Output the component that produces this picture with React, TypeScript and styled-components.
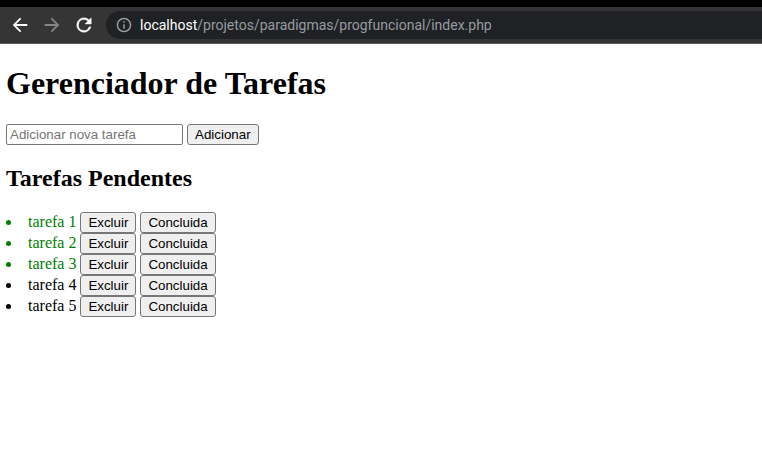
import React, { useState } from "react";
import styled, { createGlobalStyle } from "styled-components";

const GlobalStyle = createGlobalStyle`
  body {
    margin: 0;
    background: #fff;
    color: #000;
    font-family: "Liberation Serif", "Times New Roman", serif;
    font-size: 16px;
  }
`;

const BrowserBar = styled.header`
  display: flex;
  align-items: center;
  height: 28px;
  padding: 4px 0 4px 10px;
  border-top: 7px solid #000;
  border-bottom: 1px solid #5b5b5e;
  background: #353535;
  overflow: hidden;
`;

const NavButtons = styled.nav`
  display: flex;
  flex: none;
  gap: 12px;
  margin-right: 12px;
`;

const NavButton = styled.button`
  display: flex;
  padding: 0;
  border: 0;
  background: none;
  color: #fff;

  &:disabled {
    color: #868686;
  }
`;

const AddressBar = styled.div`
  display: flex;
  flex: 1;
  align-items: center;
  gap: 8px;
  height: 28px;
  padding-left: 10px;
  border-radius: 14px 0 0 14px;
  background: #202124;
  color: #9aa0a6;
`;

const Address = styled.a`
  color: #969ba1;
  font: 14px/20px Roboto, "Open Sans", sans-serif;
  text-decoration: none;
  white-space: nowrap;
`;

const Host = styled.span`
  color: #fff;
`;

const Page = styled.main`
  padding: 0 6px 20px;
`;

const Title = styled.h1`
  margin: 21px 0 22px;
  font-size: 32px;
  line-height: 37px;
`;

const Subtitle = styled.h2`
  margin: 20px 0 19px;
  font-size: 24px;
  line-height: 27px;
`;

const TaskForm = styled.form`
  display: flex;
  gap: 4px;
`;

const TaskInput = styled.input`
  box-sizing: border-box;
  width: 177px;
  height: 21px;
  padding: 1px 3px;
  border: 1px solid #767676;
  border-radius: 2px;
  background: #fff;
  font-family: "Liberation Sans", Arial, sans-serif;

  &::placeholder {
    color: #757575;
  }
`;

const Button = styled.button`
  box-sizing: border-box;
  height: 21px;
  padding: 1px 7px;
  border: 1px solid #767676;
  border-radius: 3px;
  background: #efefef;
  color: #000;
  font-family: "Liberation Sans", Arial, sans-serif;
`;

const TaskList = styled.ul`
  margin: 0;
  padding: 0;
  list-style-position: inside;
`;

const TaskItem = styled.li<{ $done: boolean }>`
  height: 21px;
  color: ${({ $done }) => ($done ? "green" : "#000")};
  line-height: 21px;
  white-space: nowrap;
`;

const BackIcon = () => (
  <svg width="20" height="20" viewBox="1 1 22 22" fill="currentColor" aria-hidden="true">
    <path d="M20 11H7.83l5.590-5.590L12 4l-8 8 8 8 1.410-1.410L7.830 13H20z" />
  </svg>
);

const ForwardIcon = () => (
  <svg width="20" height="20" viewBox="1 1 22 22" fill="currentColor" aria-hidden="true">
    <path d="M4 11h12.170l-5.590-5.590L12 4l8 8-8 8-1.410-1.410L16.170 13H4z" />
  </svg>
);

const ReloadIcon = () => (
  <svg width="20" height="20" viewBox="1 1 22 22" fill="currentColor" aria-hidden="true">
    <path
      d="M17.650 6.350A7.960 7.960 0 0 0 12 4a8 8 0 1 0 7.730 10h-2.080A6 6 0 1 1 12 6c1.660 0 3.140.690 4.220 1.780L13 11h7V4z"
      stroke="currentColor"
      strokeWidth="0.400"
    />
  </svg>
);

const InfoIcon = () => (
  <svg width="16" height="16" viewBox="1 1 22 22" fill="currentColor" aria-hidden="true">
    <path d="M11 7h2v2h-2zm0 4h2v6h-2zm1-9C6.480 2 2 6.480 2 12s4.480 10 10 10 10-4.480 10-10S17.520 2 12 2zm0 18c-4.410 0-8-3.590-8-8s3.590-8 8-8 8 3.590 8 8-3.590 8-8 8z" />
  </svg>
);

const tasks = [
  { name: "tarefa 1", done: true },
  { name: "tarefa 2", done: true },
  { name: "tarefa 3", done: true },
  { name: "tarefa 4", done: false },
  { name: "tarefa 5", done: false },
];

export default function App() {
  const [items, setItems] = useState(tasks);
  const [name, setName] = useState("");

  const addTask = (event: React.FormEvent) => {
    event.preventDefault();
    if (!name.trim()) return;
    setItems([...items, { name, done: false }]);
    setName("");
  };

  return (
    <>
      <GlobalStyle />
      <BrowserBar>
        <NavButtons>
          <NavButton type="button" aria-label="Voltar"><BackIcon /></NavButton>
          <NavButton type="button" aria-label="Avançar" disabled><ForwardIcon /></NavButton>
          <NavButton type="button" aria-label="Recarregar"><ReloadIcon /></NavButton>
        </NavButtons>
        <AddressBar>
          <InfoIcon />
          <Address href="#">
            <Host>localhost</Host>/projetos/paradigmas/progfuncional/index.php
          </Address>
        </AddressBar>
      </BrowserBar>
      <Page>
        <Title>Gerenciador de Tarefas</Title>
        <TaskForm onSubmit={addTask}>
          <TaskInput
            type="text"
            aria-label="Adicionar nova tarefa"
            placeholder="Adicionar nova tarefa"
            value={name}
            onChange={(event) => setName(event.target.value)}
          />
          <Button type="submit">Adicionar</Button>
        </TaskForm>
        <Subtitle>Tarefas Pendentes</Subtitle>
        <TaskList>
          {items.map((task, index) => (
            <TaskItem key={index} $done={task.done}>
              {task.name}{" "}
              <Button type="button" onClick={() => setItems(items.filter((_, i) => i !== index))}>
                Excluir
              </Button>{" "}
              <Button
                type="button"
                onClick={() => setItems(items.map((item, i) => (i === index ? { ...item, done: true } : item)))}
              >
                Concluida
              </Button>
            </TaskItem>
          ))}
        </TaskList>
      </Page>
    </>
  );
}
